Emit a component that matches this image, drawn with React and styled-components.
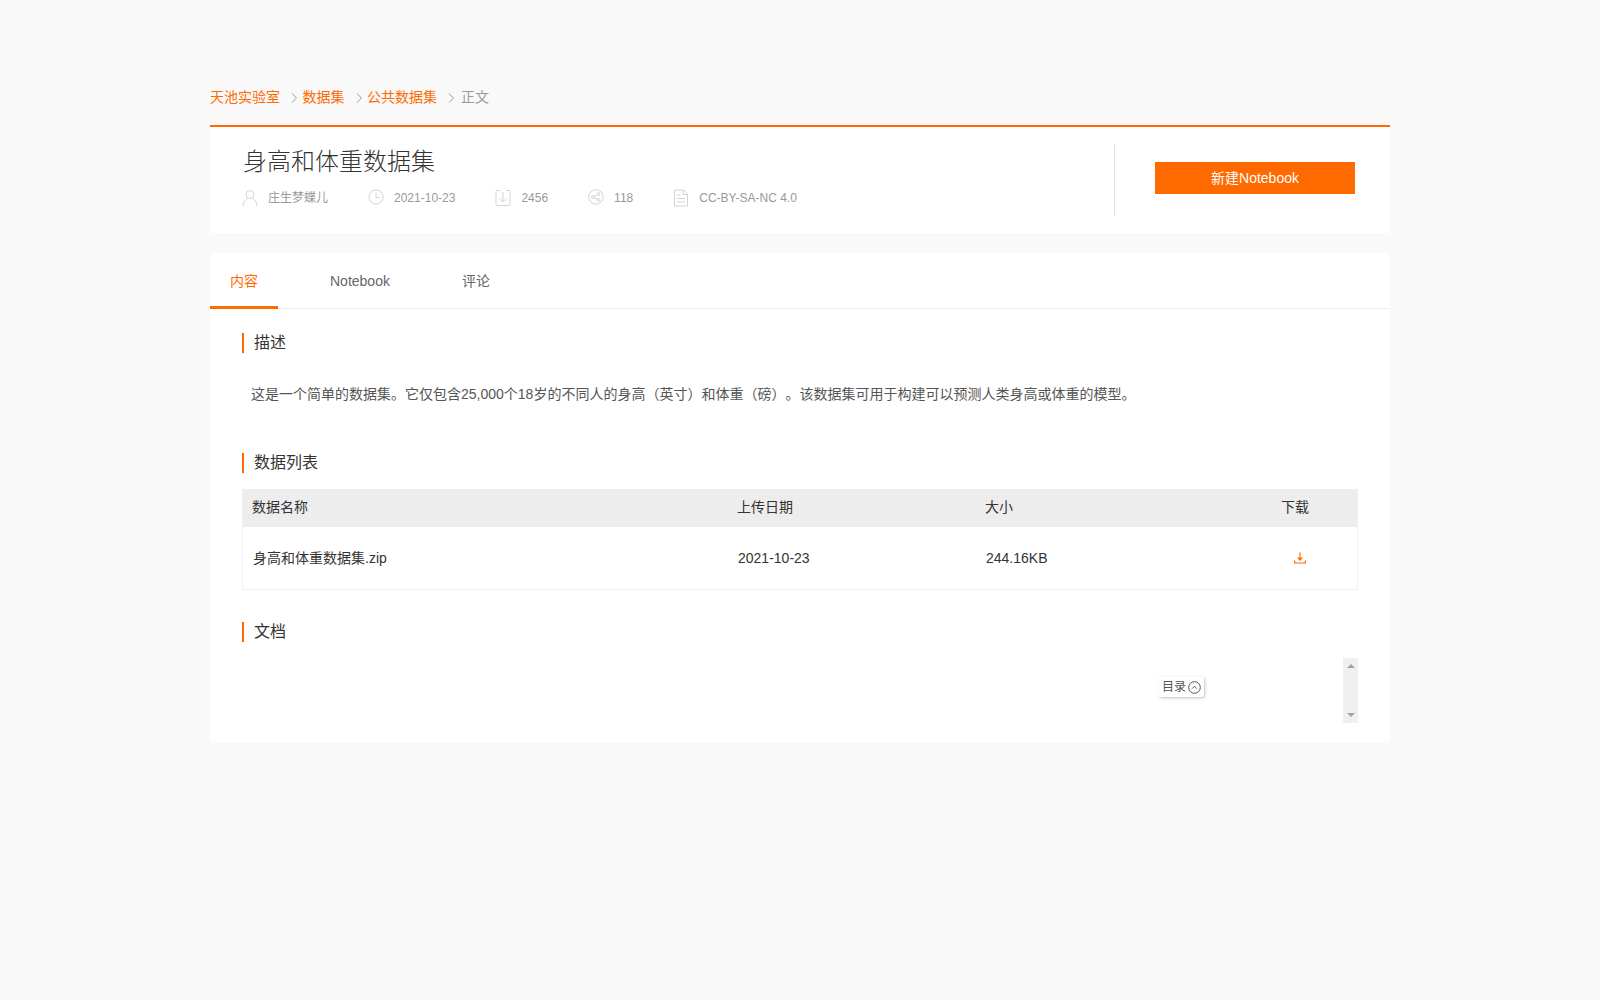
import React from 'react';
import styled, { createGlobalStyle } from 'styled-components';

const ORANGE = '#ff6a00';

const GlobalStyle = createGlobalStyle`
  html, body {
    margin: 0;
    padding: 0;
    background: #f9f9f9;
  }
  body {
    font-family: "Liberation Sans", "Noto Sans CJK SC", sans-serif;
    line-height: 20px;
    text-spacing-trim: space-all;
  }
  * {
    box-sizing: border-box;
  }
`;

const Page = styled.div`
  width: 1180px;
  min-height: 1000px;
  margin: 0 auto;
  padding-top: 87px;
`;

const Crumbs = styled.nav`
  display: flex;
  align-items: center;
  height: 20px;
  margin-bottom: 18px;
  font-size: 14px;
`;

const Crumb = styled.a`
  color: ${(p) => (p.$current ? '#999' : ORANGE)};
  text-decoration: none;
`;

const CrumbSep = styled.svg`
  width: ${(p) => (p.$wide ? '24px' : '22.5px')};
  height: 10px;
  margin-top: 2px;
  flex: none;
`;

const HeaderCard = styled.header`
  display: flex;
  justify-content: space-between;
  background: #fff;
  border-top: 2px solid ${ORANGE};
  padding: 17px 0 17px 33px;
  margin-bottom: 20px;
`;

const Title = styled.h1`
  margin: 0 0 10px;
  padding-top: 2px;
  height: 34px;
  font-family: "Liberation Serif", "Noto Sans CJK SC", serif;
  font-size: 24px;
  font-weight: 300;
  line-height: 32px;
  color: #333;
`;

const Meta = styled.div`
  display: flex;
  gap: 40px;
  margin-left: -1px;
`;

const MetaItem = styled.span`
  display: flex;
  align-items: center;
  gap: 10px;
  height: 20px;
  font-size: 12px;
  color: #999;

  svg {
    width: 16px;
    height: 18px;
    flex: none;
  }
`;

const Action = styled.div`
  width: 276px;
  height: 72px;
  padding: 18px 0 0 40px;
  border-left: 1px solid #e5e5e5;
`;

const PrimaryButton = styled.button`
  display: block;
  width: 200px;
  height: 32px;
  padding: 0;
  border: 0;
  background: ${ORANGE};
  color: #fff;
  font: inherit;
  font-size: 14px;
  line-height: 30px;
  cursor: pointer;
`;

const ContentCard = styled.main`
  background: #fff;
  padding-bottom: 20px;
`;

const Tabs = styled.div`
  display: flex;
  gap: 32px;
  height: 56px;
  border-bottom: 1px solid #f0f0f0;
`;

const Tab = styled.a`
  height: 56px;
  padding: 0 20px;
  line-height: 56px;
  font-size: 14px;
  color: ${(p) => (p.$active ? ORANGE : '#666')};
  border-bottom: 3px solid ${(p) => (p.$active ? ORANGE : 'transparent')};
`;

const Body = styled.div`
  padding: 24px 32px 0;
`;

const SectionTitle = styled.h2`
  margin: 0;
  padding-left: 10px;
  border-left: 2px solid ${ORANGE};
  font-size: 16px;
  font-weight: 400;
  line-height: 20px;
  color: #333;
`;

const Description = styled.p`
  margin: 30px 0 48px;
  padding-left: 9px;
  font-size: 14px;
  line-height: 22px;
  color: #555;
`;

const DataTable = styled.div`
  margin: 16px 0 32px;
  border: 1px solid #f0f0f0;
  border-top: 0;
  font-size: 14px;
  color: #333;
`;

const DataRow = styled.div`
  display: grid;
  grid-template-columns: 485px 248px 296px 1fr;
  align-items: center;
  height: ${(p) => (p.$head ? '38px' : '62px')};
  margin: ${(p) => (p.$head ? '0 -1px' : '0')};
  padding: 0 0 ${(p) => (p.$head ? '2px' : '0')} 10px;
  background: ${(p) => (p.$head ? '#ededed' : '#fff')};
`;

const DownloadLink = styled.a`
  display: flex;
  padding-left: 12px;
  line-height: 0;

  svg {
    width: 12px;
    height: 12px;
  }
`;

const DocFrame = styled.div`
  position: relative;
  display: flex;
  justify-content: flex-end;
  height: 65px;
  margin-top: 16px;
`;

const Scrollbar = styled.div`
  display: flex;
  flex-direction: column;
  justify-content: space-between;
  align-items: center;
  width: 15px;
  padding: 6px 0;
  background: #f0f0f0;
`;

const ScrollArrow = styled.span`
  width: 0;
  height: 0;
  border-left: 4px solid transparent;
  border-right: 4px solid transparent;
  border-bottom: ${(p) => (p.$down ? '0' : '4px solid #a3a3a3')};
  border-top: ${(p) => (p.$down ? '4px solid #a3a3a3' : '0')};
`;

const TocButton = styled.div`
  position: absolute;
  top: 19px;
  left: 917px;
  display: flex;
  align-items: center;
  gap: 2px;
  width: 45px;
  height: 20px;
  padding-left: 3px;
  background: #fff;
  border-radius: 2px;
  box-shadow: 1px 1px 3px rgba(0, 0, 0, 0.25);
  font-size: 12px;
  color: #555;

  svg {
    width: 13px;
    height: 13px;
  }
`;

const UserIcon = () => (
  <svg viewBox="0 0 16 18" fill="none" stroke="#d4d4d4" strokeWidth="1">
    <circle cx="8" cy="5.5" r="4" />
    <path d="M1 17c0-4 2.5-6.5 4.5-7.5M15 17c0-4-2.5-6.5-4.5-7.5" />
  </svg>
);

const ClockIcon = () => (
  <svg viewBox="0 0 16 18" fill="none" stroke="#d4d4d4" strokeWidth="1">
    <circle cx="8" cy="8" r="7" />
    <path d="M8 3.5V8.5H12" />
  </svg>
);

const DownloadBoxIcon = () => (
  <svg viewBox="0 0 16 18" fill="none" stroke="#d4d4d4" strokeWidth="1">
    <path d="M5 1.5H2a1 1 0 0 0-1 1v13a1 1 0 0 0 1 1h12a1 1 0 0 0 1-1v-13a1 1 0 0 0-1-1h-3" />
    <path d="M8 3v9.5M4.5 9.5 8 13l3.5-3.5" />
  </svg>
);

const ShareIcon = () => (
  <svg viewBox="0 0 16 18" fill="none" stroke="#d4d4d4" strokeWidth="1">
    <circle cx="8" cy="8" r="7.2" />
    <circle cx="5" cy="8" r="1.4" />
    <circle cx="10.5" cy="5" r="1.4" />
    <circle cx="10.5" cy="11" r="1.4" />
    <path d="M6.2 7.3 9.3 5.7M6.2 8.7l3.1 1.6" />
  </svg>
);

const DocIcon = () => (
  <svg viewBox="0 0 16 18" fill="none" stroke="#d4d4d4" strokeWidth="1">
    <path d="M1.5 1h9l4 4v12h-13z" />
    <path d="M10 1v4.5h4.5M4 6h3.5M4 9.5h8M4 13h8" />
  </svg>
);

const Chevron = ({ wide }) => (
  <CrumbSep $wide={wide} viewBox="0 0 22 10" fill="none" stroke="#999" strokeWidth="1" preserveAspectRatio="xMinYMid meet">
    <path d="M12 0.5l4.5 4.5-4.5 4.5" />
  </CrumbSep>
);

export default function App() {
  return (
    <>
      <GlobalStyle />
      <Page>
        <Crumbs>
          <Crumb>天池实验室</Crumb>
          <Chevron />
          <Crumb>数据集</Crumb>
          <Chevron />
          <Crumb>公共数据集</Crumb>
          <Chevron wide />
          <Crumb $current>正文</Crumb>
        </Crumbs>

        <HeaderCard>
          <div>
            <Title>身高和体重数据集</Title>
            <Meta>
              <MetaItem><UserIcon />庄生梦蝶儿</MetaItem>
              <MetaItem><ClockIcon />2021-10-23</MetaItem>
              <MetaItem><DownloadBoxIcon />2456</MetaItem>
              <MetaItem><ShareIcon />118</MetaItem>
              <MetaItem><DocIcon />CC-BY-SA-NC 4.0</MetaItem>
            </Meta>
          </div>
          <Action>
            <PrimaryButton>新建Notebook</PrimaryButton>
          </Action>
        </HeaderCard>

        <ContentCard>
          <Tabs>
            <Tab $active>内容</Tab>
            <Tab>Notebook</Tab>
            <Tab>评论</Tab>
          </Tabs>
          <Body>
            <SectionTitle>描述</SectionTitle>
            <Description>
              这是一个简单的数据集。它仅包含25,000个18岁的不同人的身高（英寸）和体重（磅）。该数据集可用于构建可以预测人类身高或体重的模型。
            </Description>

            <SectionTitle>数据列表</SectionTitle>
            <DataTable>
              <DataRow $head>
                <span>数据名称</span>
                <span>上传日期</span>
                <span>大小</span>
                <span>下载</span>
              </DataRow>
              <DataRow>
                <span>身高和体重数据集.zip</span>
                <span>2021-10-23</span>
                <span>244.16KB</span>
                <DownloadLink>
                  <svg viewBox="0 0 12 12" fill="none" stroke={ORANGE} strokeWidth="1.2">
                    <path d="M6 0.5V7.5M3.8 5.5 6 8l2.2-2.5" />
                    <path d="M0.6 8.5V11h10.8V8.5" />
                  </svg>
                </DownloadLink>
              </DataRow>
            </DataTable>

            <SectionTitle>文档</SectionTitle>
            <DocFrame>
              <TocButton>
                目录
                <svg viewBox="0 0 13 13" fill="none" stroke="#555" strokeWidth="1">
                  <circle cx="6.5" cy="6.5" r="5.8" />
                  <path d="M4.2 7.6 6.5 5.2l2.3 2.4" />
                </svg>
              </TocButton>
              <Scrollbar>
                <ScrollArrow />
                <ScrollArrow $down />
              </Scrollbar>
            </DocFrame>
          </Body>
        </ContentCard>
      </Page>
    </>
  );
}
